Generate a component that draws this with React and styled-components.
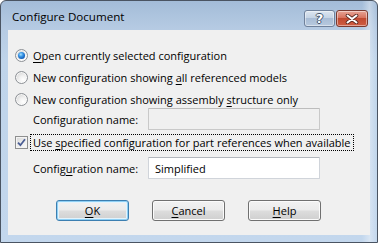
import React from "react";
import styled, { createGlobalStyle } from "styled-components";

const Global = createGlobalStyle`
  html, body { margin: 0; padding: 0; background: #ffffff; }
  body { font-family: "Open Sans", "Noto Sans", sans-serif; font-size: 11px; color: #000; }
  * { box-sizing: border-box; }
`;

const Window = styled.div`
  width: 378px;
  height: 243px;
  border: 1px solid #4a5462;
  border-radius: 6px 6px 0 0;
  background:
    linear-gradient(to right, rgba(255,255,255,0) 96%, rgba(255,255,255,0.35) 98%, rgba(255,255,255,0) 100%),
    linear-gradient(to bottom, #a3bcd8 0px, #b6cbe3 28px, #bfd4ea 60px, #c3d7ed 100%);
  display: flex;
  flex-direction: column;
  overflow: hidden;
`;

const TitleBar = styled.div`
  height: 29px;
  flex: none;
  display: flex;
  justify-content: space-between;
  align-items: flex-start;
  padding: 0 9px 0 11px;
`;

const Title = styled.div`
  margin-top: 8px;
  font-size: 11.6px;
  line-height: 16px;
  color: #000;
`;

const Caption = styled.div`
  display: flex;
  gap: 1px;
  margin-top: 9px;
`;

const CapButton = styled.div`
  width: ${(p) => p.$w}px;
  height: 17px;
  border-radius: 3px;
  display: flex;
  align-items: center;
  justify-content: center;
  border: 1px solid ${(p) => (p.$close ? "#7a3a30" : "#6f819b")};
  box-shadow: inset 0 0 0 1px rgba(255,255,255,0.45);
  background: ${(p) =>
    p.$close
      ? "linear-gradient(to bottom, #e7a596 0%, #d8735f 45%, #c14a31 50%, #cf5d43 100%)"
      : "linear-gradient(to bottom, #dde6f0 0%, #c5d4e5 45%, #a9bdd6 50%, #b7c9de 100%)"};
`;

const Client = styled.div`
  flex: 1;
  margin: 0 7px 7px 7px;
  background: #f0f0f0;
  padding: 15px 0 0 7px;
  display: flex;
  flex-direction: column;
`;

const RadioGroup = styled.div`
  display: flex;
  flex-direction: column;
  gap: 2px;
`;

const OptionRow = styled.div`
  display: flex;
  align-items: center;
  height: ${(p) => p.$h || 20}px;
  gap: ${(p) => p.$gap || 5}px;
  margin-top: ${(p) => p.$mt || 0}px;
  white-space: nowrap;
`;

const Radio = styled.span`
  width: 13px;
  height: 13px;
  flex: none;
  border-radius: 50%;
  border: 1px solid #8d9196;
  background: radial-gradient(circle at 65% 70%, #ffffff 0%, #f2f2f2 35%, #d4d4d4 85%, #c8c8c8 100%);
  box-shadow: inset 0 0 0 1px rgba(255,255,255,0.7);
  display: flex;
  align-items: center;
  justify-content: center;
`;

const RadioDot = styled.span`
  width: 7px;
  height: 7px;
  border-radius: 50%;
  background: radial-gradient(circle at 40% 35%, #a8e2ff 0%, #3a96e6 35%, #0f58b4 75%, #0a3e86 100%);
`;

const Text = styled.span`
  font-size: 11px;
  line-height: 15px;
  color: #000;
`;

const Key = styled.span`
  text-decoration: underline;
  text-underline-offset: 2px;
`;

const FieldRow = styled.div`
  display: flex;
  align-items: center;
  padding-left: 18px;
  margin-top: ${(p) => p.$mt}px;
`;

const FieldLabel = styled.span`
  width: 115px;
  flex: none;
  font-size: 11px;
`;

const Input = styled.div`
  width: 172px;
  height: 22px;
  border: 1px solid ${(p) => (p.$disabled ? "#c9c9c9" : "#d0d4da")};
  border-top-color: ${(p) => (p.$disabled ? "#bdbdbd" : "#b3b7bd")};
  background: ${(p) => (p.$disabled ? "#f0f0f0" : "#ffffff")};
  border-radius: 1px;
  padding-left: 6px;
  display: flex;
  align-items: center;
  font-size: 11px;
`;

const CheckBox = styled.span`
  width: 13px;
  height: 13px;
  flex: none;
  border: 1px solid #8e8f8f;
  background: linear-gradient(135deg, #d6d6d6 0%, #ececec 50%, #fbfbfb 100%);
  box-shadow: inset 0 0 0 1px #f4f4f4;
  display: flex;
  align-items: center;
  justify-content: center;
`;

const FocusLabel = styled.span`
  outline: 1px dotted #000;
  outline-offset: 0;
  padding: 0 2px;
  height: 15px;
  line-height: 15px;
  font-size: 11px;
`;

const ButtonRow = styled.div`
  display: flex;
  gap: 23px;
  padding-left: 41px;
  margin-top: 21px;
`;

const Button = styled.div`
  width: 73px;
  height: 21px;
  border-radius: 3px;
  border: 1px solid ${(p) => (p.$default ? "#3c7fb1" : "#707070")};
  box-shadow: ${(p) =>
    p.$default ? "inset 0 0 0 1px #8fd0f5, inset 0 0 0 2px #e3f3fc" : "inset 0 0 0 1px #fbfbfb"};
  background: linear-gradient(to bottom, #f2f2f2 0%, #ebebeb 48%, #dddddd 52%, #cfcfcf 100%);
  display: flex;
  align-items: center;
  justify-content: center;
  font-size: 11px;
  color: #000;
`;

const QMark = styled.span`
  font-family: "DejaVu Sans", sans-serif;
  font-weight: bold;
  font-size: 13px;
  line-height: 13px;
  color: #fff;
  text-shadow: 1px 0 0 #44546c, -1px 0 0 #44546c, 0 1px 0 #44546c, 0 -1px 0 #44546c;
`;

export default function App() {
  return (
    <>
      <Global />
      <Window>
        <TitleBar>
          <Title>Configure Document</Title>
          <Caption>
            <CapButton $w={31}>
              <QMark>?</QMark>
            </CapButton>
            <CapButton $w={32} $close>
              <svg width="14" height="10" viewBox="0 0 14 10">
                <path d="M2.5 1.5 L11.5 8.5 M11.5 1.5 L2.5 8.5" stroke="#5a2a22" strokeWidth="3.6" strokeLinecap="round" />
                <path d="M2.5 1.5 L11.5 8.5 M11.5 1.5 L2.5 8.5" stroke="#ffffff" strokeWidth="2" strokeLinecap="round" />
              </svg>
            </CapButton>
          </Caption>
        </TitleBar>
        <Client>
          <RadioGroup>
            <OptionRow>
              <Radio>
                <RadioDot />
              </Radio>
              <Text>
                <Key>O</Key>pen currently selected configuration
              </Text>
            </OptionRow>
            <OptionRow>
              <Radio />
              <Text>
                New configuration showing <Key>a</Key>ll referenced models
              </Text>
            </OptionRow>
            <OptionRow>
              <Radio />
              <Text>
                New configuration showing assembly <Key>s</Key>tructure only
              </Text>
            </OptionRow>
          </RadioGroup>
          <FieldRow $mt={-1}>
            <FieldLabel>
              Confi<Key>g</Key>uration name:
            </FieldLabel>
            <Input $disabled />
          </FieldRow>
          <OptionRow $h={15} $gap={3} $mt={5}>
            <CheckBox>
              <svg width="9" height="9" viewBox="0 0 9 9">
                <path d="M1 4.6 L3.4 7.2 L8 1.2" fill="none" stroke="#4b5e94" strokeWidth="1.8" />
              </svg>
            </CheckBox>
            <FocusLabel>
              Use <Key>s</Key>pecified configuration for part references when available
            </FocusLabel>
          </OptionRow>
          <FieldRow $mt={7}>
            <FieldLabel>
              Config<Key>u</Key>ration name:
            </FieldLabel>
            <Input>Simplified</Input>
          </FieldRow>
          <ButtonRow>
            <Button $default>
              <span>
                <Key>O</Key>K
              </span>
            </Button>
            <Button>
              <span>
                <Key>C</Key>ancel
              </span>
            </Button>
            <Button>
              <span>
                <Key>H</Key>elp
              </span>
            </Button>
          </ButtonRow>
        </Client>
      </Window>
    </>
  );
}
